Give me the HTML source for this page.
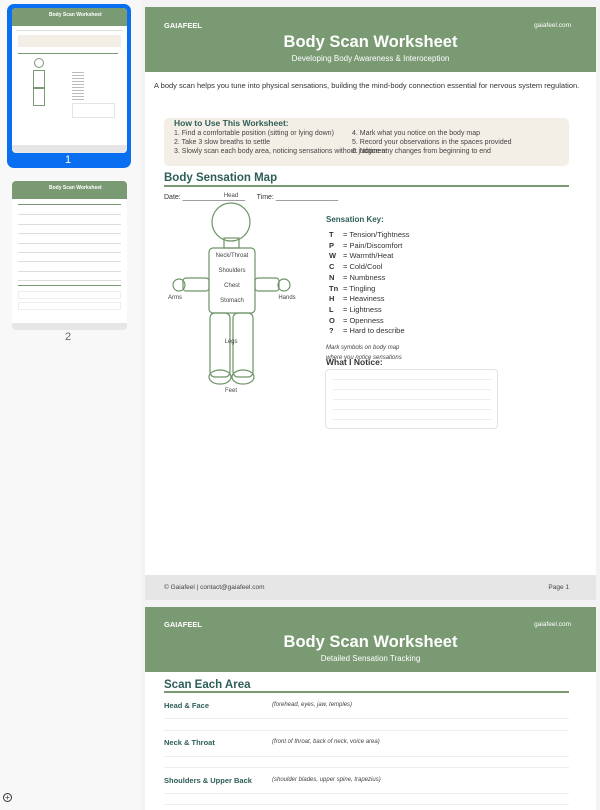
<!DOCTYPE html>
<html><head><meta charset="utf-8"><style>
*{margin:0;padding:0;box-sizing:border-box}
body{width:600px;height:810px;overflow:hidden;background:#f3f3f3;font-family:"Liberation Sans",Arial,sans-serif;position:relative}
.a{position:absolute;white-space:nowrap}
#side{position:absolute;left:0;top:0;width:141px;height:810px;background:#f8f8f8}
.pg{position:absolute;left:145px;width:451px;background:#fff}
.hdr{position:absolute;left:145px;width:451px;background:#7a9a74;color:#fff}
.g{color:#2e5e58;font-weight:bold}
.t7{font-size:7px;color:#444}
.key{font-size:7.5px;color:#333}
.th{position:absolute;left:12px;width:115px;background:#fff;border-radius:4px;overflow:hidden}
.tl{position:absolute;height:1px;background:#ddd}
</style></head><body>
<div id="side">
  <div class="a" style="left:7px;top:4px;width:124px;height:164px;background:#0a6ef0;border-radius:7px"></div>
  <div class="th" style="top:8px;height:145px">
    <div style="position:absolute;left:0;top:0;width:115px;height:18px;background:#7a9a74"></div>
    <div class="a" style="left:37px;top:4px;font-size:5px;color:#fff;font-weight:bold">Body Scan Worksheet</div>
    <div class="tl" style="left:4px;top:22px;width:107px"></div>
    <div style="position:absolute;left:6px;top:27px;width:103px;height:12px;background:#f4efe6"></div>
    <div class="tl" style="left:6px;top:45px;width:100px;background:#7a9a74"></div>
    <div style="position:absolute;left:22px;top:50px;width:10px;height:10px;border:1px solid #7a9a74;border-radius:50%"></div>
    <div style="position:absolute;left:21px;top:62px;width:12px;height:18px;border:1px solid #7a9a74"></div>
    <div style="position:absolute;left:21px;top:80px;width:12px;height:18px;border:1px solid #7a9a74"></div>
    <div style="position:absolute;left:60px;top:64px;width:12px;height:30px;background:repeating-linear-gradient(#bbb 0 1px,transparent 1px 3px)"></div>
    <div style="position:absolute;left:60px;top:95px;width:43px;height:15px;border:1px solid #e4e4e4"></div>
    <div style="position:absolute;left:0;top:137px;width:115px;height:8px;background:#e6e6e6"></div>
  </div>
  <div class="a" style="left:65px;top:154px;color:#fff;font-size:11px">1</div>
  <div class="th" style="top:181px;height:149px">
    <div style="position:absolute;left:0;top:0;width:115px;height:18px;background:#7a9a74"></div>
    <div class="a" style="left:37px;top:4px;font-size:5px;color:#fff;font-weight:bold">Body Scan Worksheet</div>
    <div class="tl" style="left:6px;top:23px;width:103px;background:#7a9a74"></div>
    <div class="tl" style="left:6px;top:33px;width:103px"></div><div class="tl" style="left:6px;top:43px;width:103px"></div>
    <div class="tl" style="left:6px;top:52px;width:103px"></div><div class="tl" style="left:6px;top:62px;width:103px"></div>
    <div class="tl" style="left:6px;top:71px;width:103px"></div><div class="tl" style="left:6px;top:80px;width:103px"></div>
    <div class="tl" style="left:6px;top:90px;width:103px"></div><div class="tl" style="left:6px;top:99px;width:103px"></div>
    <div class="tl" style="left:6px;top:104px;width:103px;background:#7a9a74"></div>
    <div style="position:absolute;left:6px;top:110px;width:103px;height:8px;border:1px solid #eee"></div>
    <div style="position:absolute;left:6px;top:121px;width:103px;height:8px;border:1px solid #eee"></div>
    <div style="position:absolute;left:0;top:142px;width:115px;height:7px;background:#e6e6e6"></div>
  </div>
  <div class="a" style="left:65px;top:331px;color:#666;font-size:11px">2</div>
  <div class="a" style="left:3px;top:793px;width:9px;height:9px;border:1px solid #333;border-radius:50%;font-size:8px;line-height:7px;text-align:center;color:#333">+</div>
</div>

<!-- page 1 -->
<div class="pg" style="top:7px;height:593px"></div>
<div class="hdr" style="top:7px;height:65px">
  <div class="a" style="left:19px;top:14px;font-size:7.5px;font-weight:bold">GAIAFEEL</div>
  <div class="a" style="right:25px;top:15px;font-size:6.5px">gaiafeel.com</div>
  <div class="a" style="left:0;width:451px;text-align:center;top:26px;font-size:16.5px;font-weight:bold">Body Scan Worksheet</div>
  <div class="a" style="left:0;width:451px;text-align:center;top:47px;font-size:8px">Developing Body Awareness &amp; Interoception</div>
</div>
<div class="a" style="left:154px;top:81px;font-size:7.5px;color:#333">A body scan helps you tune into physical sensations, building the mind-body connection essential for nervous system regulation.</div>
<div class="a" style="left:164px;top:118px;width:405px;height:48px;background:#f4efe6;border-radius:5px"></div>
<div class="a g" style="left:174px;top:118px;font-size:8.5px">How to Use This Worksheet:</div>
<div class="a t7" style="left:174px;top:130px">1. Find a comfortable position (sitting or lying down)</div>
<div class="a t7" style="left:174px;top:139px">2. Take 3 slow breaths to settle</div>
<div class="a t7" style="left:174px;top:148px">3. Slowly scan each body area, noticing sensations without judgment</div>
<div class="a t7" style="left:352px;top:130px">4. Mark what you notice on the body map</div>
<div class="a t7" style="left:352px;top:139px">5. Record your observations in the spaces provided</div>
<div class="a t7" style="left:352px;top:148px">6. Notice any changes from beginning to end</div>
<div class="a g" style="left:164px;top:172px;font-size:11.5px">Body Sensation Map</div>
<div class="a" style="left:164px;top:185px;width:405px;height:1.5px;background:#7a9a74"></div>
<div class="a" style="left:164px;top:194px;font-size:7px;color:#333">Date: ________________&nbsp;&nbsp;&nbsp;&nbsp;&nbsp;&nbsp;Time: ________________</div>
<svg class="a" style="left:160px;top:185px" width="170" height="215" viewBox="160 185 170 215" font-family="Liberation Sans,Arial,sans-serif" font-size="6" fill="#444">
<g fill="none" stroke="#6f9468" stroke-width="1.2">
<circle cx="231" cy="222" r="19"/>
<rect x="224" y="238" width="15" height="10"/>
<rect x="209" y="248" width="46" height="65" rx="4"/>
<rect x="183" y="278" width="26" height="13" rx="3"/>
<rect x="255" y="278" width="24" height="13" rx="3"/>
<circle cx="179" cy="285" r="6"/><circle cx="284" cy="285" r="6"/>
<rect x="210" y="313" width="20" height="64" rx="5"/>
<rect x="233" y="313" width="20" height="64" rx="5"/>
<ellipse cx="220" cy="377" rx="11" ry="7"/><ellipse cx="243" cy="377" rx="11" ry="7"/>
</g>
<g text-anchor="middle">
<text x="231" y="197">Head</text><text x="232" y="257">Neck/Throat</text>
<text x="232" y="272">Shoulders</text><text x="232" y="287">Chest</text>
<text x="232" y="302">Stomach</text><text x="231" y="343">Legs</text>
<text x="231" y="392">Feet</text><text x="175" y="299">Arms</text><text x="287" y="299">Hands</text>
</g></svg>
<div class="a g" style="left:326px;top:215px;font-size:8px">Sensation Key:</div>
<div class="a key" style="left:329px;top:230px;line-height:10.7px">
<b>T</b><br><b>P</b><br><b>W</b><br><b>C</b><br><b>N</b><br><b>Tn</b><br><b>H</b><br><b>L</b><br><b>O</b><br><b>?</b></div>
<div class="a key" style="left:343px;top:230px;line-height:10.7px">= Tension/Tightness<br>= Pain/Discomfort<br>= Warmth/Heat<br>= Cold/Cool<br>= Numbness<br>= Tingling<br>= Heaviness<br>= Lightness<br>= Openness<br>= Hard to describe</div>
<div class="a" style="left:326px;top:343px;font-size:6px;font-style:italic;color:#444;line-height:10px">Mark symbols on body map<br>where you notice sensations</div>
<div class="a" style="left:326px;top:357px;font-size:8.5px;font-weight:bold;color:#333">What I Notice:</div>
<div class="a" style="left:325px;top:369px;width:173px;height:60px;border:1px solid #e3e3e3;border-radius:4px"></div>
<div class="a" style="left:333px;top:379px;width:158px;height:41px;background:repeating-linear-gradient(#eee 0 1px,transparent 1px 10px)"></div>
<div class="a" style="left:145px;top:575px;width:451px;height:25px;background:#e6e6e6"></div>
<div class="a" style="left:164px;top:584px;font-size:6.5px;color:#444">© Gaiafeel | contact@gaiafeel.com</div>
<div class="a" style="right:31px;top:584px;font-size:6.5px;color:#444">Page 1</div>

<!-- page 2 -->
<div class="pg" style="top:607px;height:203px"></div>
<div class="hdr" style="top:607px;height:65px">
  <div class="a" style="left:19px;top:13px;font-size:7.5px;font-weight:bold">GAIAFEEL</div>
  <div class="a" style="right:25px;top:14px;font-size:6.5px">gaiafeel.com</div>
  <div class="a" style="left:0;width:451px;text-align:center;top:26px;font-size:16.5px;font-weight:bold">Body Scan Worksheet</div>
  <div class="a" style="left:0;width:451px;text-align:center;top:47px;font-size:8px">Detailed Sensation Tracking</div>
</div>
<div class="a g" style="left:164px;top:679px;font-size:11.5px">Scan Each Area</div>
<div class="a" style="left:164px;top:691px;width:405px;height:1.5px;background:#7a9a74"></div>
<div class="a g" style="left:164px;top:701px;font-size:7.5px">Head &amp; Face</div>
<div class="a" style="left:272px;top:702px;font-size:6px;font-style:italic;color:#444">(forehead, eyes, jaw, temples)</div>
<div class="a" style="left:164px;top:718px;width:405px;height:1px;background:#eee"></div>
<div class="a" style="left:164px;top:730px;width:405px;height:1px;background:#eee"></div>
<div class="a g" style="left:164px;top:738px;font-size:7.5px">Neck &amp; Throat</div>
<div class="a" style="left:272px;top:739px;font-size:6px;font-style:italic;color:#444">(front of throat, back of neck, voice area)</div>
<div class="a" style="left:164px;top:756px;width:405px;height:1px;background:#eee"></div>
<div class="a" style="left:164px;top:767px;width:405px;height:1px;background:#eee"></div>
<div class="a g" style="left:164px;top:776px;font-size:7.5px">Shoulders &amp; Upper Back</div>
<div class="a" style="left:272px;top:777px;font-size:6px;font-style:italic;color:#444">(shoulder blades, upper spine, trapezius)</div>
<div class="a" style="left:164px;top:793px;width:405px;height:1px;background:#eee"></div>
<div class="a" style="left:164px;top:804px;width:405px;height:1px;background:#eee"></div>
</body></html>
